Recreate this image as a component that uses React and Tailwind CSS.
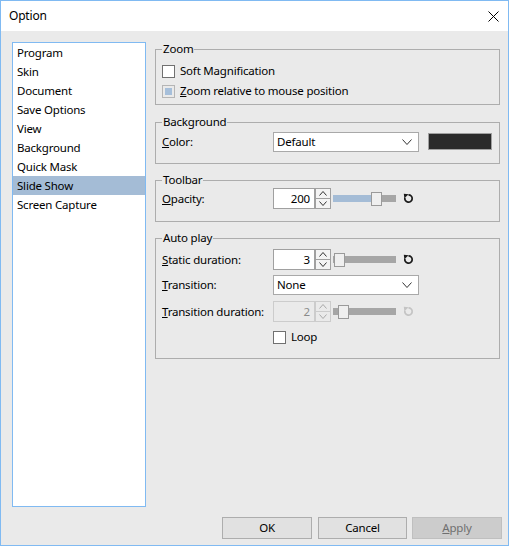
import React from "react";

function Group({ title, className = "", children }) {
  return (
    <div className={`border border-[#adadad] ${className}`}>
      <div className="-mt-[9px] -mb-[7px] ml-[6px] w-fit px-[1px] bg-[#eaeaea] leading-[16px]">{title}</div>
      {children}
    </div>
  );
}

function Chevron({ up = false, w = 10, h = 6, color = "#333" }) {
  return (
    <svg width={w} height={h} viewBox={`0 0 ${w} ${h}`}>
      {up ? (
        <path d={`M0.5 ${h - 0.5} L${w / 2} 0.5 L${w - 0.5} ${h - 0.5}`} fill="none" stroke={color} strokeWidth="1" />
      ) : (
        <path d={`M0.5 0.5 L${w / 2} ${h - 0.5} L${w - 0.5} 0.5`} fill="none" stroke={color} strokeWidth="1" />
      )}
    </svg>
  );
}

function Reset({ color = "#1a1a1a" }) {
  return (
    <svg width="11" height="11" viewBox="0 0 11 11">
      <path d="M5.5 1.8 A3.7 3.7 0 1 1 1.9 4.6" fill="none" stroke={color} strokeWidth="1.7" />
      <path d="M0.8 0.8 L5.6 1.2 L1.4 5.2 Z" fill={color} />
    </svg>
  );
}

function Spin({ value, disabled = false }) {
  const b = disabled ? "border-[#cccccc]" : "border-[#a0a0a0]";
  const ac = disabled ? "#a8a8a8" : "#333";
  return (
    <div className="flex h-[21px]">
      <div
        className={`w-[42px] h-[21px] border ${b} ${disabled ? "bg-[#eaeaea] text-[#8a8a8a]" : "bg-white text-black"} flex items-center justify-end pr-[4px]`}
      >
        {value}
      </div>
      <div className={`w-[16px] h-[21px] border ${b} ${disabled ? "bg-[#eaeaea]" : "bg-[#f4f4f4]"} flex flex-col`}>
        <div className={`h-[10px] border-b ${b} flex items-center justify-center`}>
          <Chevron up w={8} h={5} color={ac} />
        </div>
        <div className="flex-1 flex items-center justify-center">
          <Chevron w={8} h={5} color={ac} />
        </div>
      </div>
    </div>
  );
}

function Slider({ pos, fillBlue = false }) {
  return (
    <div className="relative w-[63px] h-[14px] flex items-center ml-[2px]">
      <div className="w-full h-[7px] bg-[#a6a6a6] flex">
        {fillBlue && <div className="h-full w-[40px] bg-[#a4bcd6]" />}
      </div>
      <div
        className="absolute top-0 w-[11px] h-[14px] bg-[#efefef] border border-[#9a9a9a]"
        style={{ left: pos }}
      />
    </div>
  );
}

function Select({ text }) {
  return (
    <div className="w-[146px] h-[20px] border border-[#a9a9a9] bg-white flex items-center justify-between pl-[3px] pr-[6px]">
      <span>{text}</span>
      <Chevron w={10} h={6} color="#333" />
    </div>
  );
}

function Check({ checked = false }) {
  return checked ? (
    <div className="w-[13px] h-[13px] border border-[#b5b5b5] bg-[#eaeaea] p-[2px] shrink-0">
      <div className="w-full h-full bg-[#a6bfda]" />
    </div>
  ) : (
    <div className="w-[13px] h-[13px] border border-[#707070] bg-white shrink-0" />
  );
}

const items = [
  "Program",
  "Skin",
  "Document",
  "Save Options",
  "View",
  "Background",
  "Quick Mask",
  "Slide Show",
  "Screen Capture",
];

export default function App() {
  return (
    <div className="w-[509px] h-[546px] border border-[#80baf2] bg-[#eaeaea] flex flex-col text-[11.5px] tracking-[-0.2px] leading-[16px] text-black font-['Noto_Sans',sans-serif] overflow-hidden">
      <div className="h-[30px] shrink-0 bg-white flex items-center justify-between pl-[8px] pr-[9px] text-[12px]">
        <span>Option</span>
        <svg width="11" height="11" viewBox="0 0 11 11">
          <path d="M0.5 0.5 L10.5 10.5 M10.5 0.5 L0.5 10.5" stroke="#000" strokeWidth="1" />
        </svg>
      </div>

      <div className="flex pt-[11px] pl-[11px]">
        <div className="w-[134px] h-[465px] border border-[#80baf2] bg-white flex flex-col">
          {items.map((it) => (
            <div
              key={it}
              className={`h-[19px] flex items-center pl-[4px] ${it === "Slide Show" ? "bg-[#a4bcd6]" : ""}`}
            >
              {it}
            </div>
          ))}
        </div>

        <div className="ml-[9px] w-[345px] flex flex-col pt-[7px]">
          <Group title="Zoom">
            <div className="pt-[11px] pb-[3px] pl-[6px] flex flex-col">
              <div className="h-[20px] flex items-center">
                <Check />
                <span className="ml-[5px]">Soft Magnification</span>
              </div>
              <div className="h-[20px] flex items-center">
                <Check checked />
                <span className="ml-[5px]">
                  <span className="underline">Z</span>oom relative to mouse position
                </span>
              </div>
            </div>
          </Group>

          <Group title="Background" className="mt-[17px]">
            <div className="pt-[8px] pb-[11px] pl-[6px] flex items-center h-[40px]">
              <div className="w-[111px]">
                <span className="underline">C</span>olor:
              </div>
              <Select text="Default" />
              <div className="ml-[9px] w-[64px] h-[17px] border border-[#a0a0a0] bg-[#2b2b2b]" />
            </div>
          </Group>

          <Group title="Toolbar" className="mt-[16px]">
            <div className="pt-[7px] pb-[12px] pl-[6px]">
              <div className="h-[21px] flex items-center">
                <div className="w-[111px]">
                  <span className="underline">O</span>pacity:
                </div>
                <Spin value="200" />
                <Slider pos={38} fillBlue />
                <div className="ml-[7px] flex items-center">
                  <Reset />
                </div>
              </div>
            </div>
          </Group>

          <Group title="Auto play" className="mt-[16px]">
            <div className="pt-[10px] pb-[11px] pl-[6px] flex flex-col">
              <div className="h-[21px] flex items-center">
                <div className="w-[111px]">
                  <span className="underline">S</span>tatic duration:
                </div>
                <Spin value="3" />
                <Slider pos={1} />
                <div className="ml-[7px] flex items-center">
                  <Reset />
                </div>
              </div>
              <div className="h-[20px] mt-[5px] flex items-center">
                <div className="w-[111px]">
                  <span className="underline">T</span>ransition:
                </div>
                <Select text="None" />
              </div>
              <div className="h-[21px] mt-[6px] flex items-center">
                <div className="w-[111px]">
                  <span className="underline">T</span>ransition duration:
                </div>
                <Spin value="2" disabled />
                <Slider pos={5} />
                <div className="ml-[7px] flex items-center">
                  <Reset color="#c4c4c4" />
                </div>
              </div>
              <div className="h-[20px] mt-[5px] flex items-center pl-[111px]">
                <Check />
                <span className="ml-[5px]">Loop</span>
              </div>
            </div>
          </Group>
        </div>
      </div>

      <div className="flex justify-end pr-[6px] mt-[10px]">
        <button className="w-[90px] h-[22px] border border-[#adadad] bg-[#e1e1e1] flex items-center justify-center">
          OK
        </button>
        <button className="ml-[6px] w-[89px] h-[22px] border border-[#adadad] bg-[#e1e1e1] flex items-center justify-center">
          Cancel
        </button>
        <button className="ml-[5px] w-[90px] h-[22px] border border-[#bfbfbf] bg-[#cccccc] text-[#6f6f6f] flex items-center justify-center">
          <span>
            <span className="underline">A</span>pply
          </span>
        </button>
      </div>
    </div>
  );
}
